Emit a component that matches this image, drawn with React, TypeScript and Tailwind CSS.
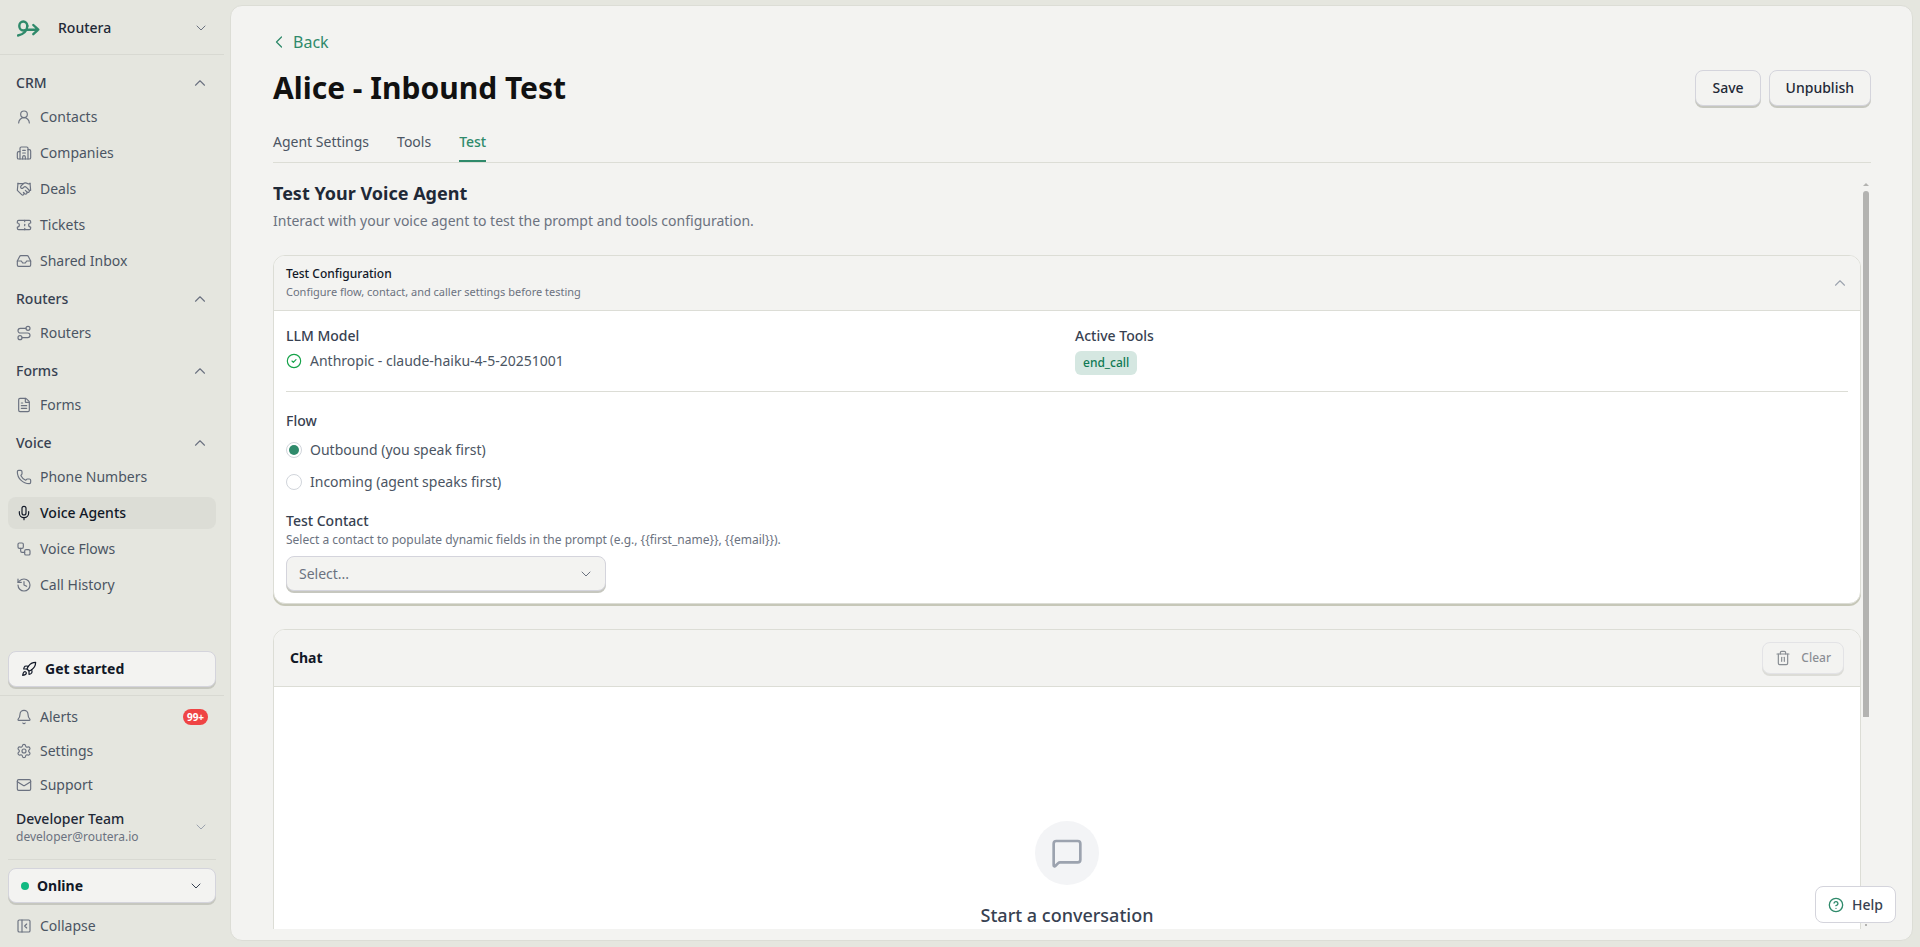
import React from "react";
import {
  ChevronDown, ChevronUp, ChevronLeft, UserRound, Building2, Handshake, Ticket, Inbox, Route, FileText, Phone, Mic, Workflow, History,
  Rocket, Bell, Settings, Mail, PanelLeftClose, CircleCheck, Trash2, MessageSquare, CircleHelp,
} from "lucide-react";

const Item = ({ icon: Icon, label, active }: { icon: any; label: string; active?: boolean }) => (
  <div className={`flex items-center h-8 mx-2 px-2 gap-2 rounded-lg text-sm ${active ? "bg-[#dcddd6] text-[#111827] font-medium" : "text-[#4b5563]"}`}>
    <Icon size={16} strokeWidth={1.75} className={`shrink-0 ${active ? "text-[#111827]" : "text-[#6b7280]"}`} />
    <span>{label}</span>
  </div>
);

const Section = ({ title, children }: { title: string; children: React.ReactNode }) => (
  <div className="mb-3">
    <div className="flex items-center justify-between h-5 pl-4 pr-[15px] mb-2 text-sm font-medium text-[#374151]">
      <span>{title}</span>
      <ChevronUp size={18} strokeWidth={1.5} className="text-[#6b7280]" />
    </div>
    <div className="flex flex-col gap-1">{children}</div>
  </div>
);

const FootItem = ({ icon: Icon, label, children }: { icon: any; label: string; children?: React.ReactNode }) => (
  <div className="flex items-center h-[34px] mx-2 px-2 gap-2 text-sm text-[#4b5563]">
    <Icon size={16} strokeWidth={1.75} className="shrink-0 text-[#6b7280]" />
    <span className="flex-1">{label}</span>
    {children}
  </div>
);

const raised = "border border-[#d4d4dc] shadow-[0_2px_0_#c6c7bf] bg-[#f3f3f1]";

export default function App() {
  return (
    <div className="relative flex h-[947px] overflow-hidden bg-[#e5e6df] font-['Noto_Sans',sans-serif] text-[#111827]">
      <aside className="flex flex-col w-[230px] shrink-0 pr-[6px]">
        <div className="flex items-center h-[55px] pt-[2px] pl-[17px] pr-[15px] border-b border-[#d8d9d2]">
          <svg width="23" height="17" viewBox="0 0 23 17" fill="none" stroke="#2f8a6b" strokeWidth="2.4" strokeLinecap="round" strokeLinejoin="round" className="shrink-0">
            <path d="M10.300 6c0 5-4 8.500-9.300 9.500" />
            <path d="M10.300 6a4 4.500 0 1 0-4 4.500c1.200 0 2.500-.4 3.500-1" />
            <path d="M10.500 9.800h10.500M16.300 5l5 4.700-5 4.500" />
          </svg>
          <span className="ml-[18px] flex-1 text-sm font-medium text-[#1f2937]">Routera</span>
          <ChevronDown size={16} strokeWidth={1.5} className="text-[#6b7280]" />
        </div>
        <nav className="flex-1 pt-[18px]">
          <Section title="CRM">
            <Item icon={UserRound} label="Contacts" />
            <Item icon={Building2} label="Companies" />
            <Item icon={Handshake} label="Deals" />
            <Item icon={Ticket} label="Tickets" />
            <Item icon={Inbox} label="Shared Inbox" />
          </Section>
          <Section title="Routers">
            <Item icon={Route} label="Routers" />
          </Section>
          <Section title="Forms">
            <Item icon={FileText} label="Forms" />
          </Section>
          <Section title="Voice">
            <Item icon={Phone} label="Phone Numbers" />
            <Item icon={Mic} label="Voice Agents" active />
            <Item icon={Workflow} label="Voice Flows" />
            <Item icon={History} label="Call History" />
          </Section>
        </nav>
        <div className="pb-[4px]">
          <div className={`flex items-center h-[36px] mx-2 px-[12px] gap-2 rounded-lg text-sm font-bold text-[#111827] ${raised}`}>
            <Rocket size={16} strokeWidth={1.75} />
            <span>Get started</span>
          </div>
          <div className="h-px bg-[#d8d9d2] mt-2 mb-1" />
          <FootItem icon={Bell} label="Alerts">
            <span className="flex items-center justify-center h-4 w-[25px] rounded-full bg-[#ef4444] text-white text-[10px] font-bold">99+</span>
          </FootItem>
          <FootItem icon={Settings} label="Settings" />
          <FootItem icon={Mail} label="Support" />
          <div className="flex items-center h-[48px] mt-[1px] pl-4 pr-[15px]">
            <div className="flex-1">
              <div className="text-sm leading-5 font-medium text-[#1f2937]">Developer Team</div>
              <div className="text-xs leading-4 text-[#6b7280]">developer@routera.io</div>
            </div>
            <ChevronDown size={16} strokeWidth={1.5} className="text-[#9ca3af]" />
          </div>
          <div className="h-px bg-[#d8d9d2] mx-2 mt-[8px] mb-[8px]" />
          <div className={`flex items-center h-[35px] mx-2 pl-[12px] pr-[11px] rounded-lg text-sm font-bold text-[#111827] ${raised}`}>
            <span className="w-2 h-2 rounded-full bg-[#10b981] mr-2" />
            <span className="flex-1">Online</span>
            <ChevronDown size={16} strokeWidth={1.5} className="text-[#374151]" />
          </div>
          <div className="flex items-center h-[34px] mt-[6px] mx-2 px-2 gap-2 text-sm text-[#4b5563]">
            <PanelLeftClose size={16} strokeWidth={1.75} className="text-[#6b7280]" />
            <span>Collapse</span>
          </div>
        </div>
      </aside>

      <main className="flex flex-col w-[1683px] h-[936px] mt-[5px] rounded-xl border border-[#dcddd6] bg-[#f3f3f1] pl-[42px] pr-[41px] pb-[11px] overflow-hidden">
        <div className="flex items-center gap-1 mt-[24px] h-6 text-base text-[#2f8a6b]">
          <ChevronLeft size={20} strokeWidth={1.5} className="-ml-[4px]" />
          <span>Back</span>
        </div>
        <div className="flex items-center justify-between mt-[6px] h-[56px]">
          <h1 className="text-[30px] leading-[45px] -mt-[2px] font-bold text-[#111111]">Alice - Inbound Test</h1>
          <div className="flex gap-2">
            <div className={`flex items-center h-[36px] px-4 rounded-lg text-sm font-medium text-[#1f2937] ${raised}`}>Save</div>
            <div className={`flex items-center h-[36px] px-4 rounded-lg text-sm font-medium text-[#1f2937] ${raised}`}>Unpublish</div>
          </div>
        </div>
        <div className="flex gap-7 mt-[8px] h-[39px] shrink-0 border-b border-[#dcddd6] text-sm text-[#4b5563]">
          <div className="flex items-center h-[38px] pb-[3px]">Agent Settings</div>
          <div className="flex items-center h-[38px] pb-[3px]">Tools</div>
          <div className="flex items-center h-[38px] pb-[1px] border-b-2 border-[#2f8a6b] text-[#2f8a6b] font-medium">Test</div>
        </div>

        <div className="flex-1 min-h-0 overflow-hidden pr-[10px] pt-[16px]">
          <h2 className="text-lg font-bold text-[#1f2937] leading-7">Test Your Voice Agent</h2>
          <p className="text-sm text-[#6b7280] leading-5 mt-[4px]">Interact with your voice agent to test the prompt and tools configuration.</p>

          <section className="mt-[24px] rounded-xl border border-[#dcddd6] bg-white shadow-[0_2px_0_#c6c7b8] overflow-hidden">
            <div className="flex items-center justify-between h-[55px] pl-3 pr-[11px] bg-[#f3f3f1] border-b border-[#dcddd6]">
              <div>
                <div className="text-xs leading-4 font-medium text-[#111827]">Test Configuration</div>
                <div className="text-[11px] leading-4 mt-[2px] text-[#6b7280]">Configure flow, contact, and caller settings before testing</div>
              </div>
              <ChevronUp size={18} strokeWidth={1.5} className="text-[#9ca3af]" />
            </div>
            <div className="px-3 pt-[15px] pb-[12px]">
              <div className="grid grid-cols-2 gap-4 pb-4 border-b border-[#dcddd6]">
                <div>
                  <div className="text-sm leading-5 font-medium text-[#374151]">LLM Model</div>
                  <div className="flex items-center gap-2 mt-[5px] text-sm leading-5 text-[#4b5563]">
                    <CircleCheck size={16} strokeWidth={1.75} className="text-[#16a34a]" />
                    Anthropic - claude-haiku-4-5-20251001
                  </div>
                </div>
                <div>
                  <div className="text-sm leading-5 font-medium text-[#374151]">Active Tools</div>
                  <div className="flex items-center w-fit h-6 mt-[5px] px-2 rounded-md bg-[#d5e7e1] text-xs font-medium text-[#0f7a55]">end_call</div>
                </div>
              </div>
              <div className="mt-[19px] text-sm leading-5 font-medium text-[#374151]">Flow</div>
              <div className="flex items-center gap-2 mt-[9px] h-5 text-sm text-[#4b5563]">
                <span className="flex items-center justify-center w-4 h-4 rounded-full border border-[#d1d5db]">
                  <span className="w-[10px] h-[10px] rounded-full bg-[#2f8a6b]" />
                </span>
                Outbound (you speak first)
              </div>
              <div className="flex items-center gap-2 mt-3 h-5 text-sm text-[#4b5563]">
                <span className="w-4 h-4 rounded-full border border-[#d1d5db]" />
                Incoming (agent speaks first)
              </div>
              <div className="mt-[19px] text-sm leading-5 font-medium text-[#374151]">Test Contact</div>
              <div className="text-xs leading-4 mt-px text-[#6b7280]">{"Select a contact to populate dynamic fields in the prompt (e.g., {{first_name}}, {{email}})."}</div>
              <div className={`flex items-center justify-between w-[320px] h-[35px] mt-[8px] pl-3 pr-[11px] rounded-lg text-sm text-[#6b7280] ${raised}`}>
                <span>Select...</span>
                <ChevronDown size={16} strokeWidth={1.5} className="text-[#6b7280]" />
              </div>
            </div>
          </section>

          <section className="mt-[25px] rounded-xl border border-[#dcddd6] bg-white overflow-hidden">
            <div className="flex items-center justify-between h-[57px] px-4 bg-[#f3f3f1] border-b border-[#dcddd6]">
              <span className="text-sm font-bold text-[#111827]">Chat</span>
              <div className={`flex items-center gap-[10px] h-[32px] px-3 rounded-lg text-xs font-medium text-[#1f2937] opacity-50 ${raised}`}>
                <Trash2 size={16} strokeWidth={1.75} />
                <span>Clear</span>
              </div>
            </div>
            <div className="h-[420px] flex flex-col items-center pt-[134px]">
              <div className="flex items-center justify-center w-16 h-16 shrink-0 rounded-full bg-[#f3f4f6]">
                <MessageSquare size={32} strokeWidth={2} className="text-[#9ca3af]" />
              </div>
              <div className="mt-4 text-lg leading-7 font-medium text-[#374151]">Start a conversation</div>
            </div>
          </section>
        </div>
      </main>

      {/* overlay scrollbar of the content pane */}
      <div className="absolute left-[1863px] top-[183px] w-0 h-0 border-x-[3px] border-x-transparent border-b-[3px] border-b-[#b3b3b1]" />
      <div className="absolute left-[1863px] top-[191px] w-[6px] h-[526px] rounded-t-full bg-[#b3b3b1]" />
      <div className="absolute left-[1865px] top-[924px] w-[2px] h-[2px] bg-[#b3b3b1]" />

      <div className="absolute left-[1815px] top-[886px] flex items-center gap-2 h-[37px] w-[81px] pl-[12px] rounded-lg border border-[#d4d4dc] bg-white text-sm font-medium text-[#374151]">
        <CircleHelp size={16} strokeWidth={2} className="text-[#2f8a6b]" />
        Help
      </div>
    </div>
  );
}
